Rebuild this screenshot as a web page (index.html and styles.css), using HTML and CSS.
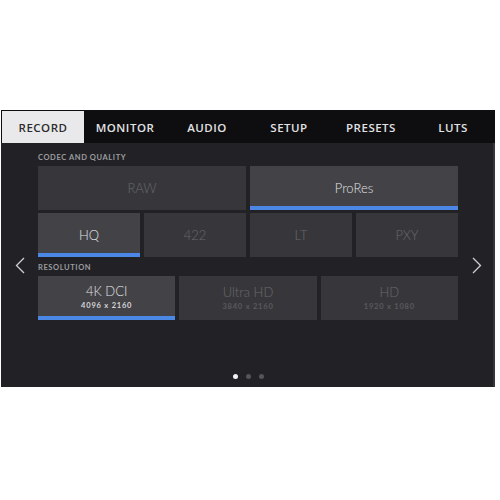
FILE: index.html
```html
<!DOCTYPE html>
<html>
<head>
<meta charset="utf-8">
<link rel="stylesheet" href="styles.css">
</head>
<body>
<div class="screen">
  <div class="tabs">
    <div class="tab active">RECORD</div>
    <div class="tab">MONITOR</div>
    <div class="tab">AUDIO</div>
    <div class="tab">SETUP</div>
    <div class="tab">PRESETS</div>
    <div class="tab">LUTS</div>
  </div>
  <div class="main">
    <div class="side">
      <svg class="chev" width="10" height="17" viewBox="0 0 10 17"><polyline points="9,1 1.5,8.5 9,16" fill="none" stroke="#d0d0d2" stroke-width="1.3"/></svg>
    </div>
    <div class="content">
      <div class="label">CODEC AND QUALITY</div>
      <div class="grid two">
        <div class="opt">RAW</div>
        <div class="opt on">ProRes</div>
      </div>
      <div class="grid four">
        <div class="opt on">HQ</div>
        <div class="opt">422</div>
        <div class="opt">LT</div>
        <div class="opt">PXY</div>
      </div>
      <div class="label res">RESOLUTION</div>
      <div class="grid three">
        <div class="opt on"><span class="name">4K DCI</span><span class="sub">4096 x 2160</span></div>
        <div class="opt"><span class="name">Ultra HD</span><span class="sub">3840 x 2160</span></div>
        <div class="opt"><span class="name">HD</span><span class="sub">1920 x 1080</span></div>
      </div>
      <div class="dots">
        <span class="dot cur"></span><span class="dot"></span><span class="dot"></span>
      </div>
    </div>
    <div class="side">
      <svg class="chev" width="10" height="17" viewBox="0 0 10 17"><polyline points="1,1 8.5,8.5 1,16" fill="none" stroke="#d0d0d2" stroke-width="1.3"/></svg>
    </div>
  </div>
</div>
</body>
</html>
```
FILE: styles.css
```css
html, body {
  margin: 0;
  padding: 0;
  background: #ffffff;
}
body {
  padding-top: 110px;
  padding-left: 1px;
  font-family: Lato, "Open Sans", sans-serif;
}
.screen {
  width: 494px;
  height: 277px;
  background: #222226;
  display: flex;
  flex-direction: column;
  box-shadow: inset -2px 0 0 #36363a;
}
.tabs {
  height: 33px;
  box-sizing: border-box;
  padding: 1px 0 0 1px;
  background: #0e0e10;
  display: flex;
}
.tab {
  width: 82px;
  display: flex;
  align-items: center;
  justify-content: center;
  color: #e2e2e4;
  font-family: "Open Sans", Lato, sans-serif;
  font-size: 11.5px;
  font-weight: 600;
  letter-spacing: 0.5px;
}
.tab.active {
  background: #e9e9eb;
  color: #2c2c2e;
}
.main {
  flex: 1;
  display: flex;
}
.side {
  width: 37px;
  display: flex;
  align-items: center;
  justify-content: center;
}
.content {
  width: 420px;
  display: flex;
  flex-direction: column;
  padding-top: 11px;
}
.label {
  font-size: 7.5px;
  line-height: 8px;
  font-weight: 700;
  letter-spacing: 0.6px;
  color: #9c9c9f;
  margin-bottom: 4px;
}
.label.res {
  margin-top: 7px;
}
.grid {
  display: grid;
  column-gap: 4px;
  height: 44px;
}
.grid + .grid {
  margin-top: 3px;
}
.two { grid-template-columns: 1fr 1fr; }
.four { grid-template-columns: repeat(4, 1fr); }
.three { grid-template-columns: repeat(3, 1fr); }
.opt {
  background: #37373b;
  color: #68686c;
  font-size: 13px;
  font-weight: 300;
  display: flex;
  flex-direction: column;
  align-items: center;
  justify-content: center;
  box-sizing: border-box;
}
.opt.on {
  background: #434347;
  color: #e0e0e2;
  border-bottom: 4px solid #4b88e6;
  padding-top: 3px;
}
.three .opt {
  padding-top: 0;
}
.three .opt.on {
  padding-top: 2px;
}
.name {
  font-size: 13px;
  line-height: 14px;
}
.sub {
  font-size: 7.5px;
  font-weight: 700;
  letter-spacing: 0.8px;
  line-height: 9px;
  margin-top: 3px;
  color: #59595d;
}
.on .sub {
  color: #d6d6d8;
}
.dots {
  margin-top: auto;
  margin-bottom: 8px;
  display: flex;
  justify-content: center;
  gap: 8px;
}
.dot {
  width: 5px;
  height: 5px;
  border-radius: 50%;
  background: #555558;
}
.dot.cur {
  background: #f2f2f2;
}
```
